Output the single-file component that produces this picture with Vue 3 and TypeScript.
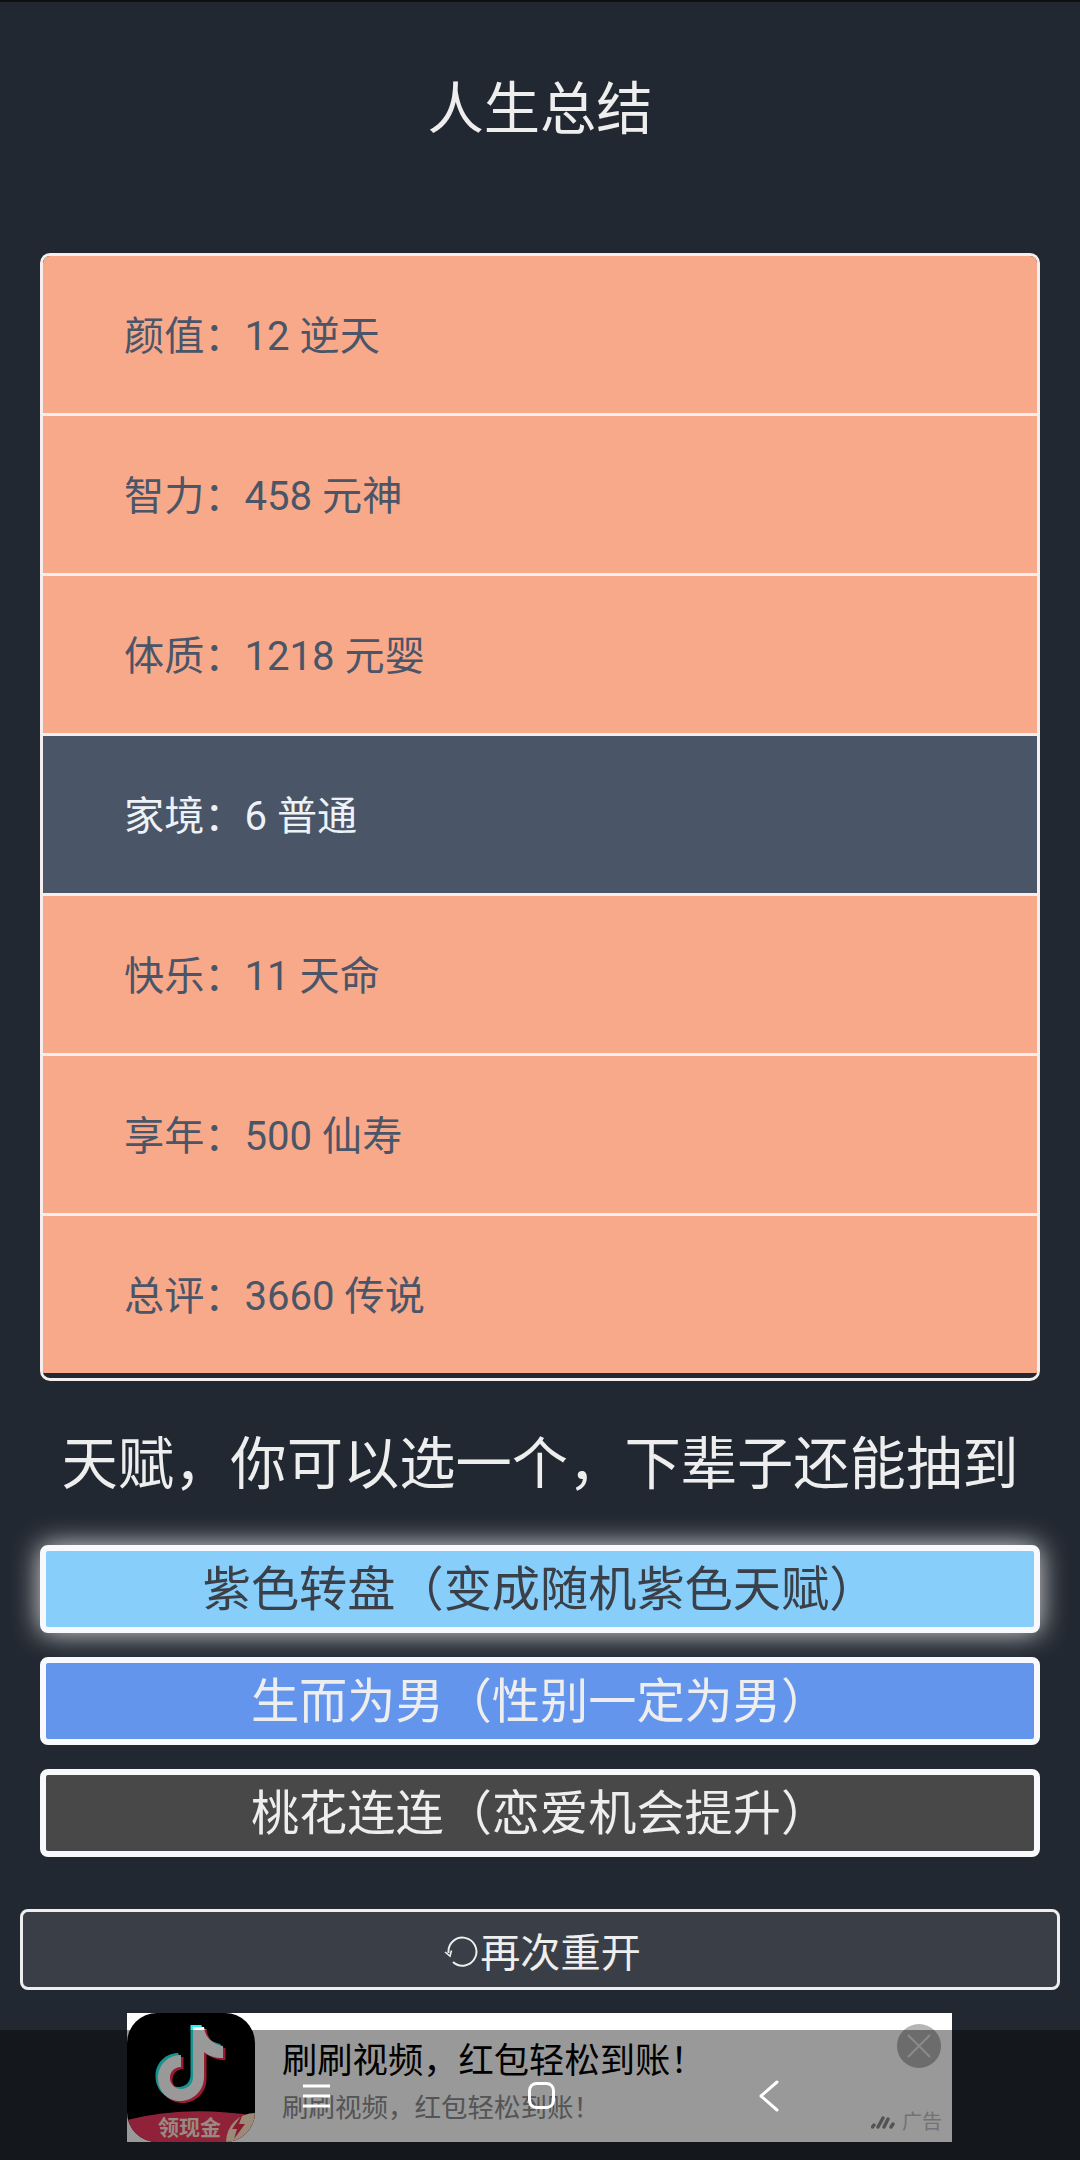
<script setup lang="ts">
interface Row { label: string; value: string; dim?: boolean }
const rows: Row[] = [
  { label: '颜值：', value: '12 逆天' },
  { label: '智力：', value: '458 元神' },
  { label: '体质：', value: '1218 元婴' },
  { label: '家境：', value: '6 普通', dim: true },
  { label: '快乐：', value: '11 天命' },
  { label: '享年：', value: '500 仙寿' },
  { label: '总评：', value: '3660 传说' },
]
const talents = [
  { text: '紫色转盘（变成随机紫色天赋）', cls: 'purple' },
  { text: '生而为男（性别一定为男）', cls: 'blue' },
  { text: '桃花连连（恋爱机会提升）', cls: 'grey' },
]
const adText = '刷刷视频，红包轻松到账！'
</script>

<template>
  <div class="page">
    <h1 class="title">人生总结</h1>
    <div class="card">
      <div v-for="r in rows" :key="r.label" class="row" :class="{ dim: r.dim }">{{ r.label }}{{ r.value }}</div>
    </div>
    <h2 class="heading">天赋，你可以选一个，下辈子还能抽到</h2>
    <div class="talents">
      <div v-for="t in talents" :key="t.text" class="talent" :class="t.cls">{{ t.text }}</div>
    </div>
    <div class="restart">
      <svg class="reload" width="40" height="40" viewBox="0 0 40 40" fill="none" stroke="#eeeeee" stroke-width="2">
        <path d="M9.5 23 A14 14 0 1 1 14 32" />
        <path d="M6 22 L11 26 L12.5 20.5" stroke-width="1.6" />
      </svg>
      <span>再次重开</span>
    </div>
    <div class="ad">
      <svg class="ad-icon" width="128" height="129" viewBox="0 0 128 129">
        <defs>
          <clipPath id="tile"><rect width="128" height="129" rx="30" /></clipPath>
          <path id="note" d="M66 14 H77 C78 24 85 31 96 33 V45 C88 45 82 43 77 39 V64 C77 78 66 88 53 88 C40 88 31 78 31 65 C31 52 41 42 54 42 V54 C47 54 43 59 43 65 C43 71 48 76 54 76 C61 76 66 71 66 64 Z" />
        </defs>
        <g clip-path="url(#tile)">
          <rect width="128" height="129" fill="#000" />
          <use href="#note" fill="#25f4ee" x="-2.5" y="-2" />
          <use href="#note" fill="#fe2c55" x="2.5" y="2" />
          <use href="#note" fill="#ffffff" />
          <path d="M0 107 Q60 92 128 103 V129 H0 Z" fill="#ef3a5e" />
          <circle cx="128" cy="129" r="29" fill="#ffe8c8" />
          <path d="M114 103 L105 116 H110 L107 126 L118 111 H112 L115 103 Z" fill="#e8304f" />
          <text x="31" y="122" class="gold">领现金</text>
        </g>
      </svg>
      <div class="ad-text">
        <div class="ad-title">{{ adText }}</div>
        <div class="ad-sub">{{ adText }}</div>
      </div>
      <div class="ad-close">
        <svg width="44" height="44" viewBox="0 0 44 44" stroke="#e6e6e6" stroke-width="2">
          <path d="M11 11 L33 33 M33 11 L11 33" />
        </svg>
      </div>
      <div class="ad-mark">
        <svg width="24" height="14" viewBox="0 0 24 14" stroke="#8a8a8a" stroke-width="3.4" stroke-linecap="round">
          <path d="M1.5 12 L3 10 M7 12 L12 3 M13 12 L17 4 M20 12 L22 9" />
        </svg>
        <span>广告</span>
      </div>
    </div>
    <div class="nav">
      <svg class="nav-menu" width="28" height="24" viewBox="0 0 28 24" stroke="#fff" stroke-width="3">
        <path d="M0 2 H27 M0 12 H27 M0 22 H27" />
      </svg>
      <svg class="nav-home" width="28" height="28" viewBox="0 0 28 28" fill="none" stroke="#fff" stroke-width="3">
        <rect x="1.5" y="1.5" width="24" height="24" rx="7" />
      </svg>
      <svg class="nav-back" width="20" height="32" viewBox="0 0 20 32" fill="none" stroke="#fff" stroke-width="3" stroke-linecap="round" stroke-linejoin="round">
        <path d="M18 2 L2 16 L18 30" />
      </svg>
    </div>
  </div>
</template>

<style scoped>
.page {
  position: relative;
  box-sizing: border-box;
  width: 1080px;
  height: 2160px;
  overflow: hidden;
  border-top: 2px solid #0e0f12;
  background: #222831;
  font-family: Roboto, "Noto Sans CJK SC", sans-serif;
  color: #eeeeee;
}
.title {
  margin: 0;
  height: 251px;
  padding-top: 70px;
  box-sizing: border-box;
  font-size: 56.3px;
  line-height: 76px;
  font-weight: 400;
  text-align: center;
}
.card {
  margin: 0 40px;
  border: 3px solid #f4efec;
  border-radius: 10px;
  overflow: hidden;
  padding-bottom: 2px;
}
.row {
  box-sizing: border-box;
  height: 160px;
  padding: 0 0 4px 81px;
  display: flex;
  align-items: center;
  font-size: 40.15px;
  background: #f8a98a;
  color: #4a5568;
  border-bottom: 3px solid #f4efec;
}
.row:last-child {
  border-bottom-color: #222831;
}
.row.dim {
  background: #4a5568;
  color: #edf2f7;
}
.heading {
  box-sizing: border-box;
  margin: 0;
  height: 164px;
  padding-bottom: 7px;
  display: flex;
  align-items: center;
  justify-content: center;
  font-size: 56.3px;
  font-weight: 400;
}
.talents {
  margin: 0 40px;
  display: flex;
  flex-direction: column;
  gap: 24px;
}
.talent {
  box-sizing: border-box;
  height: 88px;
  border: 6px solid #f7f9fc;
  border-radius: 8px;
  display: flex;
  align-items: center;
  justify-content: center;
  font-size: 48.2px;
  padding-bottom: 8px;
}
.talent.purple {
  background: #87cefa;
  color: #3a3f48;
  box-shadow: 0 0 28px rgba(255, 255, 255, 0.85);
}
.talent.blue {
  background: #6495ed;
  color: #eeeeee;
}
.talent.grey {
  background: #484848;
  color: #eeeeee;
}
.restart {
  box-sizing: border-box;
  margin: 52px 20px 0;
  height: 81px;
  border: 3px solid #eeeeee;
  border-radius: 8px;
  background: #393e47;
  display: flex;
  align-items: center;
  justify-content: center;
  font-size: 40.15px;
}
.reload {
  flex: none;
  margin-right: 1px;
}
.ad {
  position: relative;
  margin: 23px 0 0 127px;
  width: 825px;
  height: 129px;
  background: #ffffff;
  display: flex;
}
.ad-icon {
  flex: none;
}
.gold {
  font-family: "Noto Sans CJK SC", sans-serif;
  font-size: 21px;
  font-weight: 700;
  fill: #ffe6da;
}
.ad-text {
  padding: 26px 0 0 27px;
}
.ad-title {
  font-size: 35.3px;
  line-height: 44px;
  color: #000000;
}
.ad-sub {
  margin-top: 7px;
  font-size: 26.5px;
  line-height: 36px;
  color: #8c8c8c;
}
.ad-close {
  position: absolute;
  top: 11px;
  right: 11px;
  width: 44px;
  height: 44px;
  border-radius: 50%;
  background: #b5b5b5;
}
.ad-mark {
  position: absolute;
  right: 10px;
  bottom: 8px;
  display: flex;
  align-items: center;
  gap: 7px;
  font-size: 20px;
  line-height: 24px;
  color: #c0c0c0;
}
.nav {
  position: absolute;
  left: 0;
  right: 0;
  top: 2028px;
  height: 130px;
  background: rgba(0, 0, 0, 0.4);
}
.nav svg {
  position: absolute;
}
.nav-menu {
  left: 303px;
  top: 54px;
}
.nav-home {
  left: 528px;
  top: 52px;
}
.nav-back {
  left: 759px;
  top: 50px;
}
</style>
